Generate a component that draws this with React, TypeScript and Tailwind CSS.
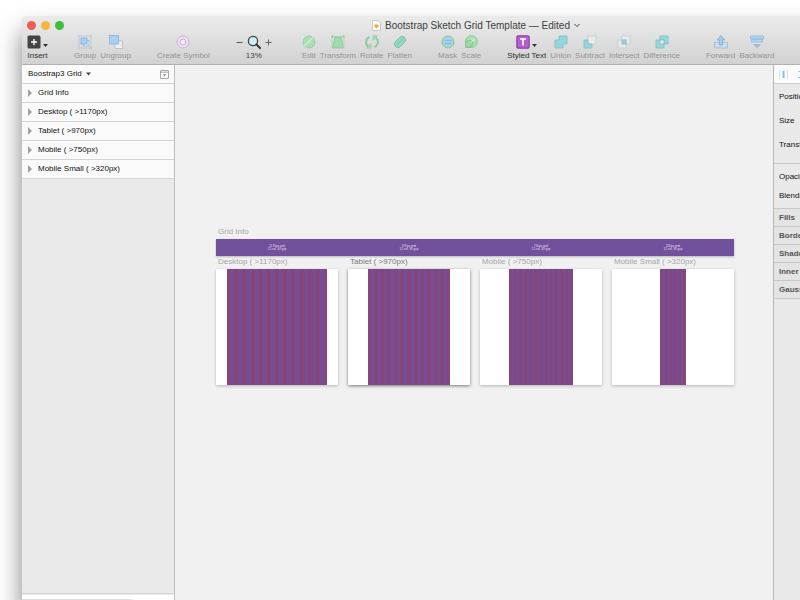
import { useState } from 'react';
import type { ReactNode } from 'react';

const artboards = [
  { name: 'Desktop ( >1170px)', columns: 12, width: 'w-[82%]', info: ['1170px grid', '12 col, 30 gap'] },
  { name: 'Tablet ( >970px)', columns: 12, width: 'w-[67%]', info: ['970px grid', '12 col, 30 gap'] },
  { name: 'Mobile ( >750px)', columns: 12, width: 'w-[52%]', info: ['750px grid', '12 col, 30 gap'] },
  { name: 'Mobile Small ( >320px)', columns: 5, width: 'w-[21%]', info: ['320px grid', '12 col, 30 gap'] },
];

function Icon({ children }: { children: ReactNode }) {
  return (
    <svg width="14" height="14" viewBox="0 0 14 14" fill="none" aria-hidden="true">
      {children}
    </svg>
  );
}

function Caret() {
  return (
    <svg width="5" height="14" viewBox="0 0 5 14" fill="#333" aria-hidden="true">
      <path d="M0 9h5L2.5 12z" />
    </svg>
  );
}

const icons = {
  insert: (
    <Icon>
      <rect x="0.5" y="0.5" width="13" height="13" rx="1.5" fill="#454545" />
      <path d="M7 4v6M4 7h6" stroke="#fff" strokeWidth="1.4" />
    </Icon>
  ),
  group: (
    <Icon>
      <rect x="1" y="1" width="12" height="12" stroke="#b4c3cf" strokeWidth="0.8" />
      <path d="M0 0h2v2H0zM12 0h2v2h-2zM0 12h2v2H0zM12 12h2v2h-2z" fill="#c2ccd4" />
      <rect x="5.5" y="5.5" width="5.5" height="5.5" fill="#d7e6f2" stroke="#94bcdf" strokeWidth="0.8" />
      <rect x="3" y="3" width="6" height="6" fill="#a9d0f0" stroke="#7eb0dc" strokeWidth="0.8" />
    </Icon>
  ),
  ungroup: (
    <Icon>
      <rect x="6" y="6" width="7.5" height="7.5" fill="#eceeef" stroke="#b5bcc2" strokeWidth="0.8" />
      <rect x="0.5" y="0.5" width="9" height="8.5" fill="#a9d0f0" stroke="#83b5df" strokeWidth="0.8" />
    </Icon>
  ),
  symbol: (
    <Icon>
      <circle cx="7" cy="7" r="6" fill="#eee6f2" stroke="#c9a8d8" strokeWidth="0.9" />
      <circle cx="7" cy="7" r="3" fill="#f4eff6" stroke="#c9a2dc" strokeWidth="1" />
      <path d="M2.5 9.5l2-1M11.5 9.5l-2-1M7 1v3" stroke="#dccbe5" strokeWidth="0.6" />
    </Icon>
  ),
  zoom: (
    <Icon>
      <circle cx="6" cy="6" r="4.6" fill="#cdeffc" stroke="#3d4145" strokeWidth="1.3" />
      <path d="M9.4 9.4l3.6 3.6" stroke="#333" strokeWidth="2" strokeLinecap="round" />
    </Icon>
  ),
  edit: (
    <Icon>
      <circle cx="7" cy="7" r="6" fill="#a8dfb2" stroke="#8fc79b" strokeWidth="0.8" />
      <path d="M2.5 11.5L11.5 2.500" stroke="#e6efe7" strokeWidth="2" />
      <path d="M2 12.500L12.500 2" stroke="#7dbb8a" strokeWidth="0.7" />
    </Icon>
  ),
  transform: (
    <Icon>
      <path d="M4 2h6l2.500 11h-11z" fill="#9edcab" stroke="#82c191" strokeWidth="0.7" />
      <path d="M1 1.500h12M1 1.500V13M13 1.500V13" stroke="#a9cfb1" strokeWidth="0.7" />
      <path d="M0.500 0.500h2v2h-2zM11.500 0.500h2v2h-2z" fill="#8fca9c" />
    </Icon>
  ),
  rotate: (
    <Icon>
      <path d="M4.500 2C0 4 0.200 9.500 3.500 11.500" stroke="#8fcb9c" strokeWidth="2" />
      <path d="M9.500 12C14 10 13.800 4.500 10.500 2.500" stroke="#8fcb9c" strokeWidth="2" />
      <path d="M6 8.500v4.700H1.500zM8 5.500V0.800h4.500z" fill="#a5deb1" stroke="#86c493" strokeWidth="0.5" />
    </Icon>
  ),
  flatten: (
    <Icon>
      <rect x="0.500" y="3.500" width="13" height="7" rx="3.500" transform="rotate(-45 7 7)" fill="#97d8b6" stroke="#78bd9c" strokeWidth="0.8" />
      <path d="M4.500 9.500l5-5" stroke="#86cfd0" strokeWidth="2.400" strokeLinecap="round" />
    </Icon>
  ),
  mask: (
    <Icon>
      <circle cx="7" cy="7" r="6" fill="#a5dcc0" stroke="#7fbdb0" strokeWidth="0.9" />
      <circle cx="7" cy="7" r="4.400" fill="#a6cff0" />
      <path d="M3.500 5.500h7M3.500 8.500h7" stroke="#8ab6d8" strokeWidth="0.9" />
    </Icon>
  ),
  scale: (
    <Icon>
      <path d="M1.500 12.500V8A6 6 0 1 1 8 12.500z" fill="#a6e0b0" stroke="#87c794" strokeWidth="0.8" />
      <circle cx="5" cy="9" r="3.500" fill="#9bdba7" stroke="#79bb87" strokeWidth="0.8" />
      <path d="M6 8l4-4M7.500 4H10v2.500" stroke="#dff0e2" strokeWidth="0.8" />
    </Icon>
  ),
  text: (
    <Icon>
      <rect x="0.8" y="0.8" width="12.400" height="12.400" rx="1" fill="#b55fd3" stroke="#7c3a94" strokeWidth="1" />
      <path d="M4 4h6M7 4v6.500" stroke="#fff" strokeWidth="1.600" />
    </Icon>
  ),
  union: (
    <Icon>
      <path d="M5 1h8v8H9v4H1V5h4z" fill="#98d6dc" stroke="#7abec6" strokeWidth="0.8" />
    </Icon>
  ),
  subtract: (
    <Icon>
      <rect x="5" y="1" width="8" height="8" fill="#e9ebeb" stroke="#c3c9ca" strokeWidth="0.8" />
      <path d="M1 5h4v4h4v4H1z" fill="#98d6dc" stroke="#7abec6" strokeWidth="0.8" />
    </Icon>
  ),
  intersect: (
    <Icon>
      <rect x="5" y="1" width="8" height="8" fill="#e9ebeb" stroke="#c3c9ca" strokeWidth="0.8" />
      <rect x="1" y="5" width="8" height="8" fill="#e9ebeb" stroke="#c3c9ca" strokeWidth="0.8" />
      <rect x="5" y="5" width="4" height="4" fill="#98d6dc" stroke="#7abec6" strokeWidth="0.8" />
    </Icon>
  ),
  difference: (
    <Icon>
      <rect x="5" y="1" width="8" height="8" fill="#98d6dc" stroke="#7abec6" strokeWidth="0.8" />
      <rect x="1" y="5" width="8" height="8" fill="#98d6dc" stroke="#7abec6" strokeWidth="0.8" />
      <rect x="5" y="5" width="4" height="4" fill="#e6eded" stroke="#7abec6" strokeWidth="0.8" />
    </Icon>
  ),
  forward: (
    <Icon>
      <path d="M0.500 7.500h13v5.500H0.500z" fill="#cddbe6" stroke="#9dbbd4" strokeWidth="0.8" />
      <path d="M7 0.500l4 4.500H8.500v5h-3V5H3z" fill="#a5caea" stroke="#7fabd0" strokeWidth="0.7" />
    </Icon>
  ),
  backward: (
    <Icon>
      <path d="M0.500 1h13v3H0.500zM1.500 4h11v3h-11z" fill="#b5d5ef" stroke="#8bb4d6" strokeWidth="0.7" />
      <path d="M3 9h8l-4 4.500z" fill="#a3bcd1" />
    </Icon>
  ),
};

type Tool = { label: string; icon: keyof typeof icons; menu?: boolean };

const leftTools: Tool[][] = [
  [{ label: 'Insert', icon: 'insert', menu: true }],
  [
    { label: 'Group', icon: 'group' },
    { label: 'Ungroup', icon: 'ungroup' },
  ],
  [{ label: 'Create Symbol', icon: 'symbol' }],
];

const rightTools: Tool[][] = [
  [
    { label: 'Edit', icon: 'edit' },
    { label: 'Transform', icon: 'transform' },
    { label: 'Rotate', icon: 'rotate' },
    { label: 'Flatten', icon: 'flatten' },
  ],
  [
    { label: 'Mask', icon: 'mask' },
    { label: 'Scale', icon: 'scale' },
  ],
  [
    { label: 'Styled Text', icon: 'text', menu: true },
    { label: 'Union', icon: 'union' },
    { label: 'Subtract', icon: 'subtract' },
    { label: 'Intersect', icon: 'intersect' },
    { label: 'Difference', icon: 'difference' },
  ],
  [
    { label: 'Forward', icon: 'forward' },
    { label: 'Backward', icon: 'backward' },
  ],
];

function ToolGroup({ tools }: { tools: Tool[] }) {
  return (
    <div className="flex gap-1">
      {tools.map((tool) => (
        <button
          key={tool.label}
          type="button"
          className={`flex flex-col items-center gap-0.5 ${tool.menu ? 'text-[#2e2e2e]' : 'text-[#949494]'}`}
        >
          <span className="flex h-3.5 justify-center gap-0.5">
            {icons[tool.icon]}
            {tool.menu && <Caret />}
          </span>
          <span>{tool.label}</span>
        </button>
      ))}
    </div>
  );
}

function TitleBar() {
  return (
    <header className="shrink-0 rounded-tl border-b border-[#b1b1b1] bg-linear-to-b from-[#ebebeb] to-[#d2d2d2]">
      <div className="grid h-[19px] grid-cols-[1fr_auto_1fr] items-center">
        <div className="flex gap-[5px] pl-[5px]">
          <button type="button" aria-label="Close" className="size-[9px] rounded-full bg-[#ec5f56]" />
          <button type="button" aria-label="Minimize" className="size-[9px] rounded-full bg-[#f4b63e]" />
          <button type="button" aria-label="Zoom window" className="size-[9px] rounded-full bg-[#3cbf3b]" />
        </div>
        <h1 className="flex items-center gap-1 text-[10px] leading-3 text-[#404040]">
          <svg width="9" height="11" viewBox="0 0 9 11" aria-hidden="true">
            <path d="M0.500 0.500h5.500l2.500 2.500v7.500h-8z" fill="#fff" stroke="#b5b5b5" strokeWidth="0.7" />
            <path d="M3.200 4.500h2.600l1.200 1.400L4.500 8.500 2 5.900z" fill="#f0a63a" />
          </svg>
          Bootstrap Sketch Grid Template — Edited
          <svg width="6" height="5" viewBox="0 0 6 5" fill="none" stroke="#444" aria-hidden="true">
            <path d="M0.500 1L3 3.500 5.500 1" />
          </svg>
        </h1>
      </div>
      <div className="flex h-[29px] gap-[26px] pl-[5px] text-[8px] leading-[10px]">
        {leftTools.map((tools) => (
          <ToolGroup key={tools[0].label} tools={tools} />
        ))}
        <div className="flex w-10 flex-col items-start gap-0.5 text-[#444]">
          <div className="flex h-3.5 items-center gap-1">
            <button type="button" aria-label="Zoom out">
              <svg width="7" height="7" viewBox="0 0 7 7" stroke="#555" aria-hidden="true">
                <path d="M0.500 3.500h6" />
              </svg>
            </button>
            {icons.zoom}
            <button type="button" aria-label="Zoom in">
              <svg width="7" height="7" viewBox="0 0 7 7" stroke="#666" aria-hidden="true">
                <path d="M0.500 3.500h6M3.500 0.500v6" />
              </svg>
            </button>
          </div>
          <span className="w-9 text-center">13%</span>
        </div>
        {rightTools.map((tools) => (
          <ToolGroup key={tools[0].label} tools={tools} />
        ))}
      </div>
    </header>
  );
}

function LayerList() {
  const [selected, setSelected] = useState('');

  return (
    <aside className="flex w-[153px] shrink-0 flex-col border-r border-[#bdbdbd] bg-[#eaeaea]">
      <div className="flex h-[19px] shrink-0 items-center justify-between border-b border-[#d0d0d0] bg-[#fbfbfb] pr-[5px] pl-1.5">
        <button type="button" className="flex items-center gap-1">
          Boostrap3 Grid
          <svg width="5" height="4" viewBox="0 0 5 4" fill="#444" aria-hidden="true">
            <path d="M0 0.500h5L2.500 3.500z" />
          </svg>
        </button>
        <button type="button" aria-label="Show pages">
          <svg width="9" height="9" viewBox="0 0 9 9" fill="none" aria-hidden="true">
            <rect x="0.500" y="0.500" width="8" height="8" rx="0.500" stroke="#a5a5a5" />
            <path d="M0.500 2.200h8" stroke="#a5a5a5" />
            <path d="M2.800 4.200h3.400L4.500 6.500z" fill="#888" />
          </svg>
        </button>
      </div>
      <ul>
        {['Grid Info', ...artboards.map((a) => a.name)].map((name) => (
          <li key={name} className="border-b border-[#d4d4d4] bg-[#fafafa]">
            <button
              type="button"
              aria-pressed={selected === name}
              onClick={() => setSelected(name)}
              className="flex h-[18px] w-full items-center gap-[5px] pl-[5px] text-left"
            >
              <svg width="6" height="8" viewBox="0 0 6 8" fill="#a0a0a0" aria-hidden="true">
                <path d="M1 0v8L5 4z" />
              </svg>
              {name}
            </button>
          </li>
        ))}
      </ul>
      <footer className="mt-auto border-t border-[#d4d4d4] pt-px">
        <div className="h-1 bg-white" />
        <div className="h-px bg-linear-to-r from-[#dedede] from-70% to-white to-75%" />
      </footer>
    </aside>
  );
}

function Canvas() {
  return (
    <main className="min-w-0 flex-1 bg-[#f1f1f1] pt-[161px] pr-[39px] pl-[41px] text-[#a6a6a6]">
      <h2 className="mb-px pl-0.5 leading-3">Grid Info</h2>
      <div className="grid h-[17px] grid-cols-4 items-center gap-2.5 bg-[#71509c] text-center text-[3px] leading-[3px] text-[#e8def2] shadow-[0_1px_2px_rgba(0,0,0,0.25)]">
        {artboards.map((board) => (
          <p key={board.name}>
            {board.info[0]}
            <br />
            {board.info[1]}
          </p>
        ))}
      </div>
      <div className="grid grid-cols-4 gap-2.5">
        {artboards.map((board, i) => (
          <section key={board.name} className="min-w-0">
            <h2 className={`mb-px truncate pl-0.5 leading-3 ${i === 1 ? 'text-[#777]' : ''}`}>
              {board.name}
            </h2>
            <div
              className={`flex aspect-[122/116] justify-center bg-white ${
                i === 1 ? 'shadow-[0_1px_3px_rgba(0,0,0,0.5)]' : 'shadow-[0_1px_3px_rgba(0,0,0,0.25)]'
              }`}
            >
              <div className={`flex border-x border-[#8e4675] ${board.width}`}>
                {Array.from({ length: board.columns }, (_, c) => (
                  <div
                    key={c}
                    className="flex-1 bg-linear-to-r from-[#86457a] from-15% via-[#6f509e] to-[#86457a] to-85%"
                  />
                ))}
              </div>
            </div>
          </section>
        ))}
      </div>
    </main>
  );
}

function Inspector() {
  return (
    <aside className="w-[157px] shrink-0 border-l border-[#b8b8b8] bg-[#e9e9e9]">
      <div className="flex h-[19px] items-center gap-1.5 border-b border-[#cdcdcd] bg-[#fbfbfb] pl-[5px]">
        <button type="button" aria-label="Align left">
          <svg width="9" height="9" viewBox="0 0 9 9" aria-hidden="true">
            <path d="M0.500 0v9M8.500 0v9" stroke="#d3e5f0" />
            <path d="M3.500 1h2v7h-2z" fill="#86bfe4" />
          </svg>
        </button>
        <button type="button" aria-label="Distribute" className="pl-1">
          <svg width="9" height="9" viewBox="0 0 9 9" aria-hidden="true">
            <path d="M0 1.500h9M0 7.500h9" stroke="#9ccbe9" />
            <path d="M2 4h5v1H2z" fill="#86bfe4" />
          </svg>
        </button>
      </div>
      <div className="flex h-20 flex-col border-b border-[#c8c8c8] pt-px pl-[5px] leading-6">
        <span>Position</span>
        <span>Size</span>
        <span>Transform</span>
      </div>
      <div className="flex h-[45px] flex-col border-b border-[#c8c8c8] pt-[3px] pl-[5px] leading-[19px]">
        <span>Opacity</span>
        <span>Blending</span>
      </div>
      {['Fills', 'Borders', 'Shadows', 'Inner Shadows', 'Gaussian Blur'].map((title) => (
        <h3
          key={title}
          className="border-b border-[#c8c8c8] bg-[#e4e4e4] pl-[5px] leading-[17px] font-bold text-[#555]"
        >
          {title}
        </h3>
      ))}
    </aside>
  );
}

export default function App() {
  return (
    <div className="h-screen overflow-hidden bg-white pt-4 pl-[22px] font-['Liberation_Sans',Arial,sans-serif] text-[8px] text-[#111]">
      {/* The window runs past the right edge of the screen */}
      <div className="flex h-full w-[calc(100%+130px)] flex-col rounded-tl shadow-[0_16px_24px_rgba(0,0,0,0.5)]">
        <TitleBar />
        <div className="flex min-h-0 flex-1">
          <LayerList />
          <Canvas />
          <Inspector />
        </div>
      </div>
    </div>
  );
}
